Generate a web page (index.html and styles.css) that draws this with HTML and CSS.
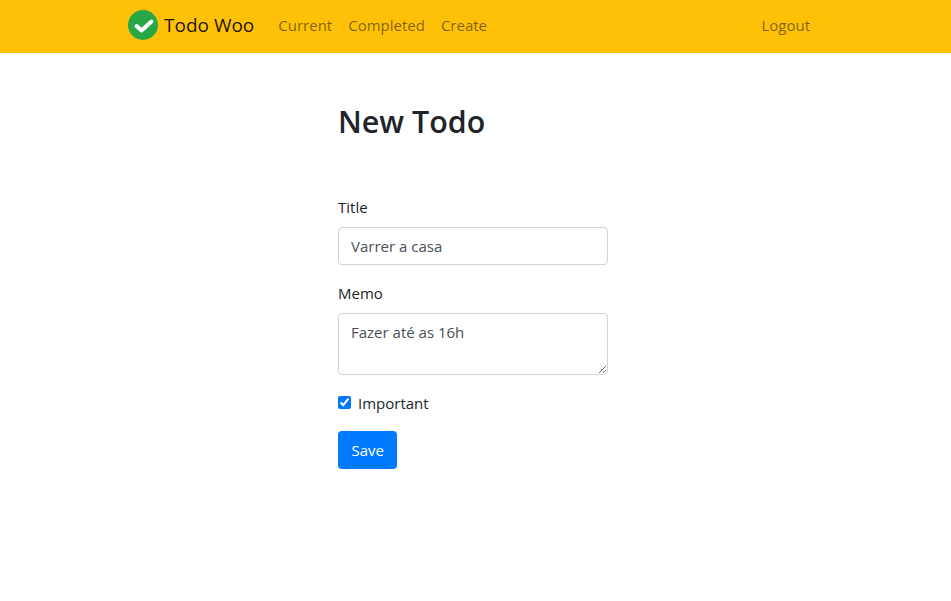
FILE: index.html
```html
<!DOCTYPE html>
<html lang="en">

<head>
  <meta charset="UTF-8" />
  <title>New Todo</title>
  <link rel="stylesheet" href="styles.css">
</head>

<body>
  <nav class="navbar">
    <a href="#" class="brand">
      <svg class="brand-logo" viewBox="0 0 30 30" width="30" height="30">
        <circle cx="15" cy="15" r="15" fill="#28a745" />
        <path d="M8.5 16l5 4.5 10-9" fill="none" stroke="#fff" stroke-width="4" stroke-linecap="round" stroke-linejoin="round" />
      </svg>
      Todo Woo
    </a>
    <div class="nav-links">
      <a href="#" class="nav-link">Current</a>
      <a href="#" class="nav-link">Completed</a>
      <a href="#" class="nav-link">Create</a>
    </div>
    <a href="#" class="nav-link">Logout</a>
  </nav>

  <main class="content">
    <h1>New Todo</h1>

    <form>
      <div class="form-group">
        <label for="title">Title</label>
        <input type="text" id="title" class="form-control" value="Varrer a casa" />
      </div>

      <div class="form-group">
        <label for="memo">Memo</label>
        <textarea id="memo" class="form-control memo" rows="2">Fazer até as 16h</textarea>
      </div>

      <div class="form-check">
        <input type="checkbox" id="important" checked />
        <label for="important">Important</label>
      </div>

      <button type="submit" class="save-btn">Save</button>
    </form>
  </main>
</body>

</html>
```

FILE: styles.css
```css
* {
  margin: 0;
  padding: 0;
  box-sizing: border-box;
  font-family: 'Open Sans', 'Noto Sans', sans-serif;
}

body {
  background-color: #ffffff;
  color: #212529;
  font-size: 15px;
  line-height: 24px;
}

a {
  text-decoration: none;
}

.navbar {
  display: flex;
  align-items: center;
  height: 53px;
  padding: 0 133px 3px 128px;
  background-color: #ffc107;
}

.brand {
  display: flex;
  align-items: center;
  gap: 6px;
  margin-right: 16px;
  color: rgba(0, 0, 0, 0.9);
  font-size: 19px;
}

.nav-links {
  display: flex;
  flex: 1;
}

.nav-link {
  padding: 0 8px;
  color: rgba(0, 0, 0, 0.5);
}

.content {
  width: 270px;
  margin-left: 338px;
  padding-top: 49px;
}

h1 {
  margin-bottom: 53px;
  font-size: 30.4px;
  font-weight: 600;
  line-height: 40px;
}

.form-group {
  margin-bottom: 16px;
}

.form-group label {
  display: block;
  margin-bottom: 8px;
}

.form-control {
  display: block;
  width: 100%;
  height: 38px;
  padding: 6px 12px;
  border: 1px solid #ced4da;
  border-radius: 4px;
  color: #495057;
  font-size: 15px;
  line-height: 24px;
}

.memo {
  height: 62px;
}

.form-check {
  display: flex;
  align-items: center;
  gap: 7px;
  margin-bottom: 16px;
}

.form-check input {
  width: 13px;
  height: 13px;
  margin-bottom: 2px;
}

.save-btn {
  height: 38px;
  padding: 0 13.5px;
  border: none;
  border-radius: 4px;
  background-color: #007bff;
  color: #ffffff;
  font-size: 15px;
  cursor: pointer;
}
```
